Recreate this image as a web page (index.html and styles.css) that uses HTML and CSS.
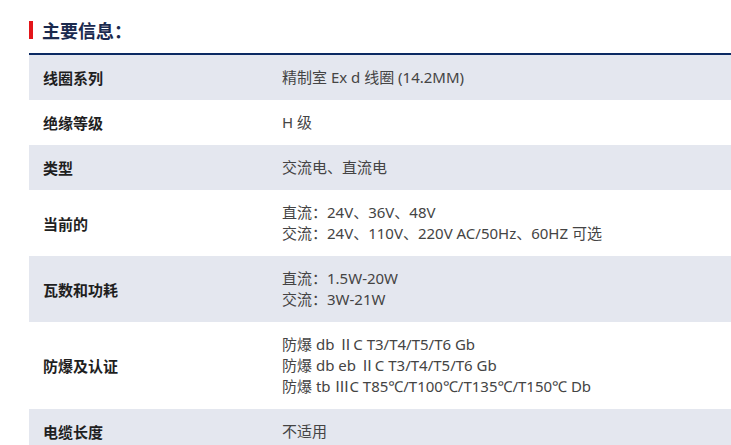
FILE: index.html
```html
<!DOCTYPE html>
<html lang="zh">
<head>
<meta charset="utf-8">
<link rel="stylesheet" href="styles.css">
</head>
<body>
<div class="section">
  <div class="title"><span class="bar"></span><h2>主要信息：</h2></div>
  <div class="table">
    <div class="row alt"><div class="label">线圈系列</div><div class="value">精制室 Ex d 线圈 (14.2MM)</div></div>
    <div class="row"><div class="label">绝缘等级</div><div class="value">H 级</div></div>
    <div class="row alt"><div class="label">类型</div><div class="value">交流电、直流电</div></div>
    <div class="row"><div class="label">当前的</div><div class="value">直流：24V、36V、48V<br>交流：24V、110V、220V AC/50Hz、60HZ 可选</div></div>
    <div class="row alt"><div class="label">瓦数和功耗</div><div class="value">直流：1.5W-20W<br>交流：3W-21W</div></div>
    <div class="row"><div class="label">防爆及认证</div><div class="value">防爆 db ⅡC T3/T4/T5/T6 Gb<br>防爆 db eb ⅡC T3/T4/T5/T6 Gb<br>防爆 tb ⅢC T85℃/T100℃/T135℃/T150℃ Db</div></div>
    <div class="row alt"><div class="label">电缆长度</div><div class="value">不适用</div></div>
  </div>
</div>
</body>
</html>
```
FILE: styles.css
```css
html, body {
  margin: 0;
  padding: 0;
  background: #ffffff;
}
body {
  font-family: "Noto Sans CJK SC", "Noto Sans", sans-serif;
  overflow: hidden;
}
.section {
  padding-left: 29px;
}
.title {
  display: flex;
  align-items: center;
  gap: 9px;
  margin-top: 21px;
  height: 18px;
  margin-bottom: 14px;
}
.bar {
  width: 4px;
  height: 18px;
  background: #e3151a;
}
.title h2 {
  margin: 0;
  font-size: 18px;
  line-height: 18px;
  font-weight: 700;
  color: #1b2a4e;
}
.table {
  border-top: 2px solid #0b2a63;
}
.row {
  display: grid;
  grid-template-columns: 253px 1fr;
  align-items: center;
  padding: 12px 0;
  background: #ffffff;
}
.row.alt {
  background: #e4e7ef;
}
.label {
  padding-left: 14px;
  font-size: 15px;
  line-height: 21px;
  font-weight: 700;
  color: #1f1f1f;
}
.value {
  font-family: "Noto Sans", "Noto Sans CJK SC", sans-serif;
  font-size: 15px;
  line-height: 21px;
  color: #444444;
}
```
